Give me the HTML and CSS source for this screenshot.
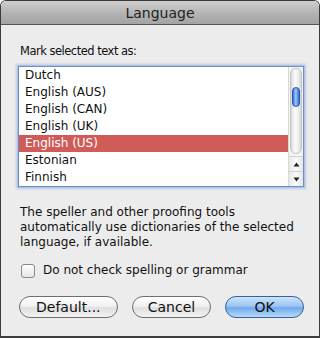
FILE: index.html
```html
<!DOCTYPE html>
<html>
<head>
<meta charset="utf-8">
<link rel="stylesheet" href="styles.css">
</head>
<body>
<div class="window">
  <div class="titlebar">Language</div>
  <div class="content">
    <div class="label">Mark selected text as:</div>
    <div class="listbox">
      <div class="rows">
        <div class="row">Dutch</div>
        <div class="row">English (AUS)</div>
        <div class="row">English (CAN)</div>
        <div class="row">English (UK)</div>
        <div class="row selected">English (US)</div>
        <div class="row">Estonian</div>
        <div class="row">Finnish</div>
      </div>
      <div class="scrollbar">
        <div class="track"><div class="thumb"></div></div>
        <div class="arrow">
          <svg width="7" height="5" viewBox="0 0 7 5"><path d="M3.5 0.5 L6.5 4.5 L0.5 4.5 Z" fill="#222"/></svg>
        </div>
        <div class="arrow">
          <svg width="7" height="5" viewBox="0 0 7 5"><path d="M0.5 0.5 L6.5 0.5 L3.5 4.5 Z" fill="#222"/></svg>
        </div>
      </div>
    </div>
    <p class="info">The speller and other proofing tools automatically use dictionaries of the selected language, if available.</p>
    <div class="check">
      <span class="box"></span>
      <span>Do not check spelling or grammar</span>
    </div>
    <div class="buttons">
      <div class="btn btn-default">Default...</div>
      <div class="btn btn-cancel">Cancel</div>
      <div class="btn btn-ok">OK</div>
    </div>
  </div>
</div>
</body>
</html>
```
FILE: styles.css
```css
html, body {
  margin: 0;
  padding: 0;
  background: #ffffff;
}
body {
  font-family: "DejaVu Sans", "Liberation Sans", sans-serif;
  font-size: 12px;
  color: #111;
}
.window {
  width: 320px;
  height: 338px;
  box-sizing: border-box;
  border: 1px solid #3c3c3c;
  border-bottom-width: 2px;
  border-radius: 6px 6px 0 0;
  background: #ececec;
  overflow: hidden;
  display: flex;
  flex-direction: column;
}
.titlebar {
  height: 23px;
  flex: none;
  border-bottom: 1px solid #555;
  background: linear-gradient(#cfcfcf, #b5b5b5 50%, #a3a3a3);
  text-align: center;
  font-size: 14px;
  line-height: 24px;
  color: #222;
}
.content {
  padding: 19px 15px 0 17px;
  display: flex;
  flex-direction: column;
}
.label {
  line-height: 15px;
  margin-left: 2px;
  font-size: 11.5px;
  letter-spacing: -0.5px;
}
.listbox {
  margin-top: 7px;
  height: 121px;
  box-sizing: border-box;
  border: 1px solid #6d8fc4;
  box-shadow: 0 0 0 1px #a9c2e6, 0 0 2px 2px rgba(130,165,220,0.45);
  background: #fff;
  display: flex;
}
.rows {
  flex: 1;
  display: flex;
  flex-direction: column;
}
.row {
  height: 17px;
  line-height: 17px;
  padding-left: 6px;
  white-space: nowrap;
}
.row.selected {
  background: #cf5c58;
  color: #fff;
}
.scrollbar {
  width: 14px;
  flex: none;
  display: flex;
  flex-direction: column;
  border-left: 1px solid #d8d8d8;
  background: #f4f4f4;
}
.track {
  flex: 1;
  margin: 1px 1px 2px 1px;
  border-radius: 7px;
  background: linear-gradient(90deg, #d9d9d9, #fbfbfb 40%, #f0f0f0 70%, #d6d6d6);
  border: 1px solid #c4c4c4;
  position: relative;
}
.thumb {
  position: absolute;
  left: 1px;
  right: 1px;
  top: 18px;
  height: 18px;
  border-radius: 6px;
  background: linear-gradient(90deg, #3b73d4, #9cc3f5 45%, #6fa3ec 70%, #3568c6);
  border: 1px solid #2a55a8;
}
.arrow {
  height: 14px;
  display: flex;
  align-items: center;
  justify-content: center;
  border-top: 1px solid #d4d4d4;
  background: linear-gradient(90deg, #e8e8e8, #fafafa 50%, #e6e6e6);
}
.info {
  margin: 18px 0 0 2px;
  line-height: 15px;
}
.check {
  margin: 13px 0 0 3px;
  display: flex;
  align-items: center;
  line-height: 15px;
}
.box {
  width: 12px;
  height: 12px;
  border: 1px solid #8a8a8a;
  border-radius: 3px;
  background: linear-gradient(#fdfdfd, #e6e6e6);
  margin-right: 8px;
}
.buttons {
  margin-top: 18px;
  margin-left: 1px;
  display: flex;
  gap: 14px;
}
.btn {
  height: 20px;
  line-height: 20px;
  text-align: center;
  border-radius: 11px;
  border: 1px solid #6f6f6f;
  font-size: 14px;
  color: #111;
  background: linear-gradient(#ffffff, #f1f1f1 45%, #dedede 55%, #f3f3f3);
}
.btn-default { width: 97px; }
.btn-cancel { width: 78px; }
.btn-ok {
  width: 77px;
  border-color: #3c5f99;
  background: linear-gradient(#cde3fb, #9cc6f3 45%, #6fa9ec 55%, #b7dbfb);
}
```
